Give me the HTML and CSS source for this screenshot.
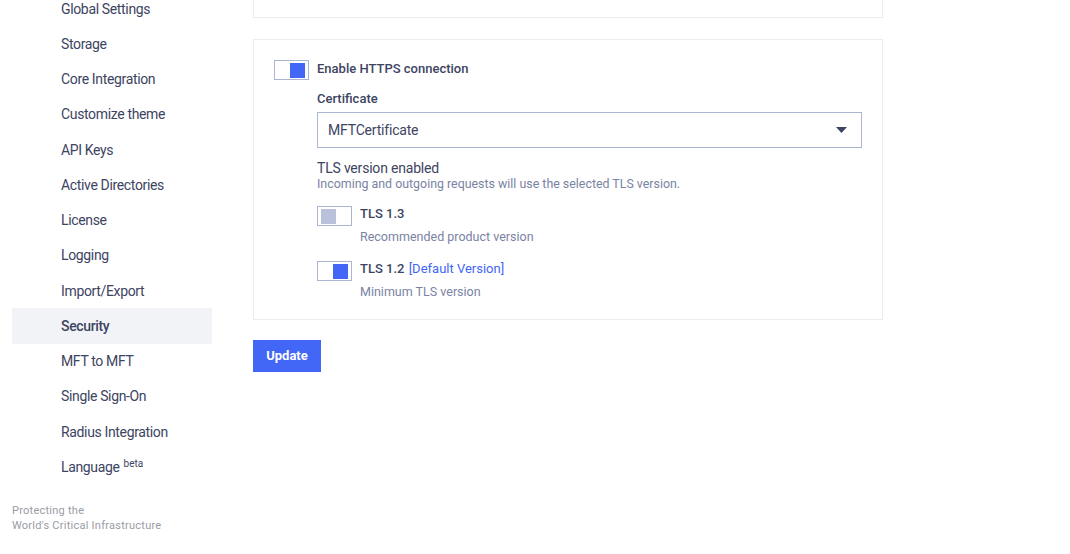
FILE: index.html
```html
<!DOCTYPE html>
<html>
<head>
<meta charset="utf-8">
<link rel="stylesheet" href="styles.css">
</head>
<body>
<div class="page">
  <aside class="sidebar">
    <nav class="nav">
      <div class="nav-item">Global Settings</div>
      <div class="nav-item">Storage</div>
      <div class="nav-item">Core Integration</div>
      <div class="nav-item">Customize theme</div>
      <div class="nav-item">API Keys</div>
      <div class="nav-item">Active Directories</div>
      <div class="nav-item">License</div>
      <div class="nav-item">Logging</div>
      <div class="nav-item">Import/Export</div>
      <div class="nav-item active">Security</div>
      <div class="nav-item">MFT to MFT</div>
      <div class="nav-item">Single Sign-On</div>
      <div class="nav-item">Radius Integration</div>
      <div class="nav-item">Language <sup class="beta">beta</sup></div>
    </nav>
    <div class="tagline">Protecting the<br>World's Critical Infrastructure</div>
  </aside>
  <main class="main">
    <div class="card card-top"></div>
    <div class="card card-https">
      <div class="row">
        <span class="toggle on"><span class="knob"></span></span>
        <span class="title">Enable HTTPS connection</span>
      </div>
      <div class="indent">
        <div class="label">Certificate</div>
        <div class="select">
          <span>MFTCertificate</span>
          <svg class="caret" width="11" height="6" viewBox="0 0 11 6"><path d="M0 0h11L5.5 6z" fill="#3d4462"/></svg>
        </div>
        <div class="tls-head">TLS version enabled</div>
        <div class="tls-sub">Incoming and outgoing requests will use the selected TLS version.</div>
        <div class="opt">
          <span class="toggle off"><span class="knob"></span></span>
          <div class="opt-text">
            <div class="opt-title">TLS 1.3</div>
            <div class="opt-desc">Recommended product version</div>
          </div>
        </div>
        <div class="opt">
          <span class="toggle on"><span class="knob"></span></span>
          <div class="opt-text">
            <div class="opt-title">TLS 1.2 <span class="def">[Default Version]</span></div>
            <div class="opt-desc">Minimum TLS version</div>
          </div>
        </div>
      </div>
    </div>
    <button class="btn">Update</button>
  </main>
</div>
</body>
</html>
```
FILE: styles.css
```css
* { box-sizing: border-box; }
html, body { margin: 0; padding: 0; background: #fff; }
body {
  font-family: Roboto, "Liberation Sans", sans-serif;
  color: #3d4462;
  width: 1070px;
  height: 554px;
  overflow: hidden;
}
.page { display: flex; height: 554px; }
.sidebar {
  width: 253px;
  flex: none;
  display: flex;
  flex-direction: column;
  padding-left: 12px;
}
.nav { margin-top: -9px; display: flex; flex-direction: column; }
.nav-item {
  width: 200px;
  height: 35.25px;
  padding-left: 49px;
  display: flex;
  align-items: center;
  font-size: 14px;
  letter-spacing: -0.35px;
  color: #3d4462;
}
.nav-item.active { background: #f2f3f7; font-weight: 500; }
.beta { font-size: 10px; margin-left: 4px; position: relative; top: -3px; letter-spacing: 0; }
.tagline {
  margin-top: 18px;
  font-size: 11px;
  letter-spacing: 0.25px;
  line-height: 15px;
  color: #9a9ca4;
}
.main { width: 630px; flex: none; display: flex; flex-direction: column; }
.card { border: 1px solid #ececec; background: #fff; }
.card-top { height: 19px; margin-top: -1px; border-top: none; }
.card-https {
  margin-top: 21px;
  height: 281px;
  padding: 20px 20px 0 20px;
}
.row { display: flex; align-items: flex-start; gap: 8px; }
.row .title { margin-top: 1px; }
.toggle {
  width: 35px;
  height: 20px;
  border: 1px solid #aab5d3;
  display: flex;
  align-items: center;
  padding: 0 3px;
  background: #fff;
  flex: none;
}
.toggle .knob { width: 15px; height: 15px; }
.toggle.on { justify-content: flex-end; }
.toggle.on .knob { background: #4266f6; }
.toggle.off .knob { background: #b9c2da; }
.title { font-size: 13px; font-weight: 500; line-height: 16px; }
.indent { padding-left: 43px; }
.label { font-size: 13px; font-weight: 500; margin-top: 11px; }
.select {
  margin-top: 6px;
  width: 545px;
  height: 36px;
  border: 1px solid #aab5d3;
  display: flex;
  align-items: center;
  justify-content: space-between;
  padding: 0 14px 0 10px;
  font-size: 14px;
  letter-spacing: -0.2px;
}
.caret { display: block; }
.tls-head { margin-top: 12px; font-size: 14px; line-height: 16px; letter-spacing: -0.2px; }
.tls-sub { font-size: 12.4px; color: #7a83a3; line-height: 16px; }
.opt { display: flex; gap: 8px; margin-top: 14px; }
.opt + .opt { margin-top: 16px; }
.opt-title { font-size: 13px; font-weight: 500; line-height: 16px; }
.def { color: #4266f6; font-weight: 400; margin-left: 1px; }
.opt-desc { font-size: 12.5px; color: #7a83a3; margin-top: 7px; line-height: 16px; }
.btn {
  margin-top: 20px;
  width: 68px;
  height: 32px;
  background: #4266f6;
  color: #fff;
  border: none;
  font-family: inherit;
  font-size: 13px;
  font-weight: 700;
  padding: 0 0 2px 0;
  cursor: pointer;
}
```
